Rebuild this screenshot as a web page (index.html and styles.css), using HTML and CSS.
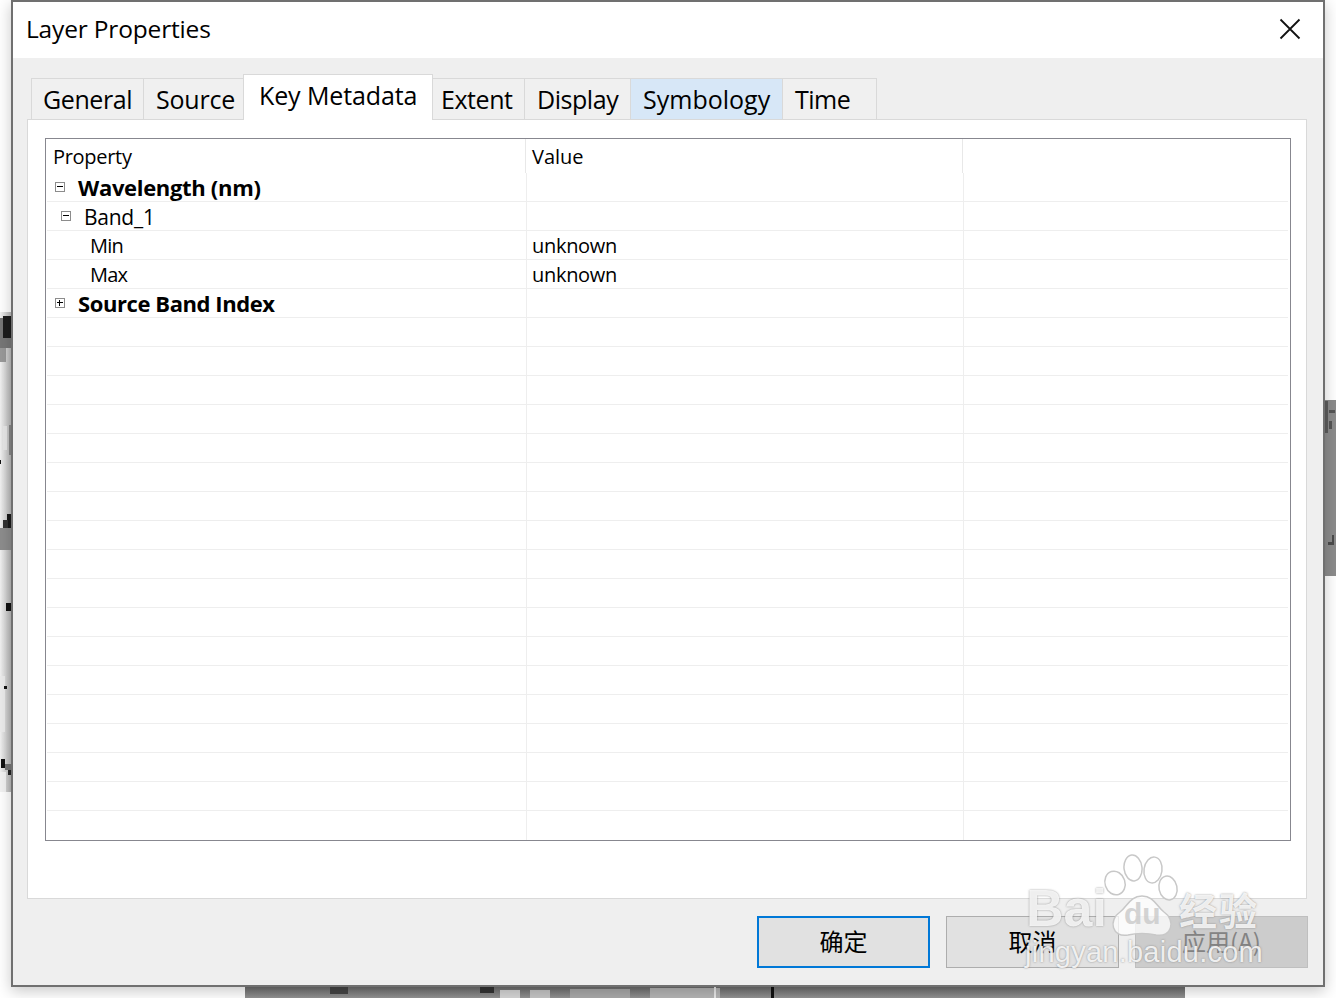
FILE: index.html
```html
<!DOCTYPE html>
<html lang="en">
<head>
<meta charset="utf-8">
<title>Layer Properties</title>
<link rel="stylesheet" href="styles.css">
</head>
<body>
<div class="desktop">
  <svg class="backdrop" width="1336" height="998" viewBox="0 0 1336 998" shape-rendering="crispEdges" aria-hidden="true">
    <defs>
      <linearGradient id="fadeL" x1="0" x2="1" y1="0" y2="0">
        <stop offset="0" stop-color="#f2f2f2"/><stop offset="1" stop-color="#b8b8b8"/>
      </linearGradient>
      <linearGradient id="fadeB" x1="0" x2="0" y1="0" y2="1">
        <stop offset="0" stop-color="#6c6c6c"/><stop offset="1" stop-color="#939393"/>
      </linearGradient>
    </defs>
    <rect x="0" y="312" width="11" height="480" fill="url(#fadeL)"/>
    <rect x="0" y="318" width="11" height="30" fill="#777"/>
    <rect x="3" y="316" width="8" height="22" fill="#1c1c1c"/>
    <rect x="0" y="348" width="6" height="14" fill="#999"/>
    <rect x="3" y="426" width="4" height="24" fill="#e8e8e8"/>
    <rect x="9" y="425" width="2" height="30" fill="#888"/>
    <rect x="0" y="460" width="1" height="4" fill="#111"/>
    <rect x="0" y="528" width="11" height="22" fill="#8d8d8d"/>
    <rect x="7" y="514" width="4" height="14" fill="#1a1a1a"/>
    <rect x="3" y="520" width="5" height="8" fill="#333"/>
    <rect x="6" y="603" width="5" height="8" fill="#111"/>
    <rect x="0" y="676" width="5" height="56" fill="#ececec"/>
    <rect x="4" y="686" width="3" height="3" fill="#111"/>
    <rect x="1" y="759" width="4" height="9" fill="#111"/>
    <rect x="5" y="764" width="6" height="6" fill="#777"/>
    <rect x="8" y="770" width="3" height="5" fill="#222"/>
    <rect x="0" y="772" width="6" height="20" fill="#f2f2f2"/>
    <rect x="1325" y="400" width="11" height="176" fill="#8c8c8c"/>
    <rect x="1325" y="401" width="3" height="32" fill="#5c5c5c"/>
    <rect x="1329" y="410" width="6" height="3" fill="#555"/>
    <rect x="1329" y="421" width="3" height="8" fill="#555"/>
    <rect x="1328" y="542" width="6" height="3" fill="#4c4c4c"/>
    <rect x="1332" y="535" width="2" height="8" fill="#4c4c4c"/>
    <rect x="245" y="987" width="940" height="11" fill="url(#fadeB)"/>
    <rect x="330" y="987" width="18" height="7" fill="#444"/>
    <rect x="480" y="987" width="14" height="6" fill="#333"/>
    <rect x="500" y="990" width="20" height="8" fill="#d4d4d4"/>
    <rect x="530" y="990" width="20" height="8" fill="#c4c4c4"/>
    <rect x="570" y="989" width="60" height="9" fill="#a8a8a8"/>
    <rect x="650" y="988" width="70" height="10" fill="#b4b4b4"/>
    <rect x="714" y="987" width="2" height="11" fill="#e8e8e8"/>
    <rect x="771" y="987" width="3" height="11" fill="#111"/>
    <rect x="650" y="0" width="450" height="1" fill="#444"/>
  </svg>

  <main class="dialog">
    <header class="titlebar">
      <h1 class="title">Layer Properties</h1>
      <svg class="close" width="22" height="22" viewBox="0 0 22 22" aria-label="Close">
        <path d="M1.5 1.5 20.5 20.5M20.5 1.5 1.5 20.5" fill="none" stroke="#111" stroke-width="1.8"/>
      </svg>
    </header>

    <div class="content">
      <nav class="tabs">
        <span class="tab tab-general">General</span>
        <span class="tab tab-source">Source</span>
        <span class="tab tab-active">Key Metadata</span>
        <span class="tab tab-extent">Extent</span>
        <span class="tab tab-display">Display</span>
        <span class="tab tab-symbology">Symbology</span>
        <span class="tab tab-time">Time</span>
      </nav>

      <section class="pane">
        <div class="tree">
          <div class="tree-head">
            <span class="head-cell head-prop">Property</span>
            <span class="head-cell head-val">Value</span>
            <span class="head-cell"></span>
          </div>
          <div class="row"><span class="cell name group"><i class="box minus"></i>Wavelength (nm)</span><span class="cell"></span><span class="cell"></span></div>
          <div class="row"><span class="cell name band"><i class="box minus"></i>Band_1</span><span class="cell"></span><span class="cell"></span></div>
          <div class="row"><span class="cell name leaf">Min</span><span class="cell val">unknown</span><span class="cell"></span></div>
          <div class="row"><span class="cell name leaf">Max</span><span class="cell val">unknown</span><span class="cell"></span></div>
          <div class="row"><span class="cell name group group-source"><i class="box plus"></i>Source Band Index</span><span class="cell"></span><span class="cell"></span></div>
          <div class="row"><span class="cell"></span><span class="cell"></span><span class="cell"></span></div>
          <div class="row"><span class="cell"></span><span class="cell"></span><span class="cell"></span></div>
          <div class="row"><span class="cell"></span><span class="cell"></span><span class="cell"></span></div>
          <div class="row"><span class="cell"></span><span class="cell"></span><span class="cell"></span></div>
          <div class="row"><span class="cell"></span><span class="cell"></span><span class="cell"></span></div>
          <div class="row"><span class="cell"></span><span class="cell"></span><span class="cell"></span></div>
          <div class="row"><span class="cell"></span><span class="cell"></span><span class="cell"></span></div>
          <div class="row"><span class="cell"></span><span class="cell"></span><span class="cell"></span></div>
          <div class="row"><span class="cell"></span><span class="cell"></span><span class="cell"></span></div>
          <div class="row"><span class="cell"></span><span class="cell"></span><span class="cell"></span></div>
          <div class="row"><span class="cell"></span><span class="cell"></span><span class="cell"></span></div>
          <div class="row"><span class="cell"></span><span class="cell"></span><span class="cell"></span></div>
          <div class="row"><span class="cell"></span><span class="cell"></span><span class="cell"></span></div>
          <div class="row"><span class="cell"></span><span class="cell"></span><span class="cell"></span></div>
          <div class="row"><span class="cell"></span><span class="cell"></span><span class="cell"></span></div>
          <div class="row"><span class="cell"></span><span class="cell"></span><span class="cell"></span></div>
          <div class="row"><span class="cell"></span><span class="cell"></span><span class="cell"></span></div>
          <div class="row row-last"><span class="cell"></span><span class="cell"></span><span class="cell"></span></div>
        </div>
      </section>

      <footer class="buttons">
        <button class="btn btn-default" type="button">确定</button>
        <button class="btn" type="button">取消</button>
        <button class="btn btn-disabled" type="button" disabled>应用(A)</button>
      </footer>
    </div>
  </main>

  <div class="watermark">
    <svg class="paw" width="90" height="90" viewBox="0 0 90 90" aria-hidden="true">
      <g fill="#fff" fill-opacity=".75" stroke="#c8c8c8" stroke-width="1.5">
        <ellipse cx="21" cy="29" rx="10" ry="12" transform="rotate(-18 21 29)"/>
        <ellipse cx="39" cy="14" rx="9" ry="13" transform="rotate(-6 39 14)"/>
        <ellipse cx="59" cy="16" rx="9" ry="13" transform="rotate(8 59 16)"/>
        <ellipse cx="74" cy="34" rx="9" ry="12" transform="rotate(-12 74 34)"/>
        <path d="M48 42C36 42 34 52 26 58 14 66 18 84 34 81 42 79 54 79 62 81 78 84 82 66 70 58 62 52 60 42 48 42Z"/>
      </g>
    </svg>
    <span class="wm-bai">Bai</span>
    <span class="wm-du">du</span>
    <span class="wm-jy">经验</span>
    <span class="wm-url">jingyan.baidu.com</span>
  </div>
</div>
</body>
</html>
```
FILE: styles.css
```css
* { box-sizing: border-box; }
html, body { margin: 0; padding: 0; }
body { background: #fff; font-family: "Open Sans", "Noto Sans", "Noto Sans CJK SC", sans-serif; color: #000; }

.desktop { position: relative; width: 1336px; height: 998px; overflow: hidden; background: #fff; }
.backdrop { position: absolute; left: 0; top: 0; }

.dialog {
  position: absolute; left: 11px; top: 0; width: 1314px; height: 987px;
  border: 2px solid #707070; background: #efefef;
  display: flex; flex-direction: column;
  box-shadow: 0 4px 14px rgba(0,0,0,.22);
}
.titlebar {
  height: 56px; background: #fff; flex: none;
  display: flex; align-items: center; justify-content: space-between;
  padding: 0 22px 2px 13px;
}
.title { margin: -2px 0 0; font-size: 24.5px; font-weight: 400; letter-spacing: -.17px; }
.close { display: block; }

.content { flex: 1; display: flex; flex-direction: column; padding: 0 16px 0 14px; min-height: 0; }

.tabs { display: flex; align-items: flex-end; height: 61px; padding-left: 4px; flex: none; position: relative; z-index: 1; }
.tab {
  height: 42px; margin-bottom: -1px; border: 1px solid #d9d9d9; border-left-width: 0;
  background: #f0f0f0; font-size: 25px; letter-spacing: -.3px;
  display: flex; align-items: center; justify-content: flex-start; padding-left: 12px;
  white-space: nowrap;
}
.tab-general { width: 113px; border-left-width: 1px; padding-left: 11px; letter-spacing: -.4px; }
.tab-source { width: 99px; border-right-width: 0; letter-spacing: -.2px; }
.tab-active { width: 190px; height: 46px; background: #fff; border-left-width: 1px; border-bottom: 0; padding: 0 0 5px 15px; letter-spacing: -.12px; }
.tab-extent { width: 92px; padding-left: 8px; letter-spacing: -.45px; }
.tab-display { width: 106px; letter-spacing: -.45px; }
.tab-symbology { width: 152px; background: #d7e7f7; letter-spacing: 0; }
.tab-time { width: 94px; letter-spacing: -.5px; }

.pane {
  flex: none; height: 780px; background: #fff; border: 1px solid #d9d9d9;
  padding: 18px 15px 0 17px;
}
.tree { height: 703px; border: 1px solid #87878f; background: #fff; overflow: hidden; font-size: 20px; letter-spacing: -.3px; }

.tree-head { display: grid; grid-template-columns: 480px 437px 1fr; height: 34px; }
.head-cell { display: flex; align-items: center; padding: 0 0 0 7px; border-right: 1px solid #e8e8e8; }
.head-cell:last-child { border-right: 0; }
.head-val { padding-left: 6px; letter-spacing: 0; }

.row { display: grid; grid-template-columns: 480px 437px 1fr; height: 29px; margin-left: 1px; border-bottom: 1px solid #eeeeee; margin-right: 2px; }
.row-last { border-bottom: 0; }
.cell { display: flex; align-items: center; line-height: 26px; border-right: 1px solid #eeeeee; min-width: 0; white-space: nowrap; }
.cell:last-child { border-right: 0; }
.val { padding: 2px 0 0 5px; }
.name { position: relative; }
.group { font-weight: 700; font-size: 22px; letter-spacing: -.32px; padding-left: 31px; }
.group-source { letter-spacing: -.42px; }
.band { padding: 2px 0 0 37px; font-size: 21px; letter-spacing: -.25px; }
.leaf { padding: 2px 0 0 43px; letter-spacing: -.8px; }

.box { position: absolute; top: 9px; width: 10px; height: 10px; border: 1px solid #8c8c8c; background: #fff; }
.group .box { left: 8px; }
.band .box { left: 14px; }
.box::before { content: ""; position: absolute; left: 1px; top: 3px; width: 6px; height: 1px; background: #000; }
.plus::after { content: ""; position: absolute; left: 3px; top: 1px; width: 1px; height: 6px; background: #000; }

.buttons { display: flex; justify-content: flex-end; gap: 16px; padding: 17px 0 0; margin-right: -1px; }
.btn {
  width: 173px; height: 52px; border: 1px solid #adadad; background: #e1e1e1; padding: 0 0 3px;
  font-family: "Noto Sans CJK SC", sans-serif; font-size: 24px; color: #000;
}
.btn-default { border: 2px solid #0078d7; }
.btn-disabled { background: #cccccc; border-color: #bfbfbf; color: #838383; }

.watermark {
  position: absolute; left: 1024px; top: 854px; width: 245px; height: 116px;
  color: rgba(255,255,255,.85); font-family: "Liberation Sans", sans-serif;
  text-shadow: 0 0 2px rgba(110,110,110,.75);
}
.paw { position: absolute; left: 70px; top: 0; }
.wm-bai { position: absolute; left: 2px; top: 24px; font-size: 52px; line-height: 60px; font-weight: 700; }
.wm-du { position: absolute; left: 100px; top: 42px; font-size: 30px; line-height: 36px; font-weight: 700; color: rgba(200,200,200,.8); text-shadow: none; }
.wm-jy { position: absolute; left: 155px; top: 30px; font-family: "Noto Sans CJK SC", sans-serif; font-size: 38px; line-height: 50px; font-weight: 700; letter-spacing: 2px; }
.wm-url { position: absolute; left: 1px; top: 80px; font-size: 29px; line-height: 36px; letter-spacing: .25px; }
```
